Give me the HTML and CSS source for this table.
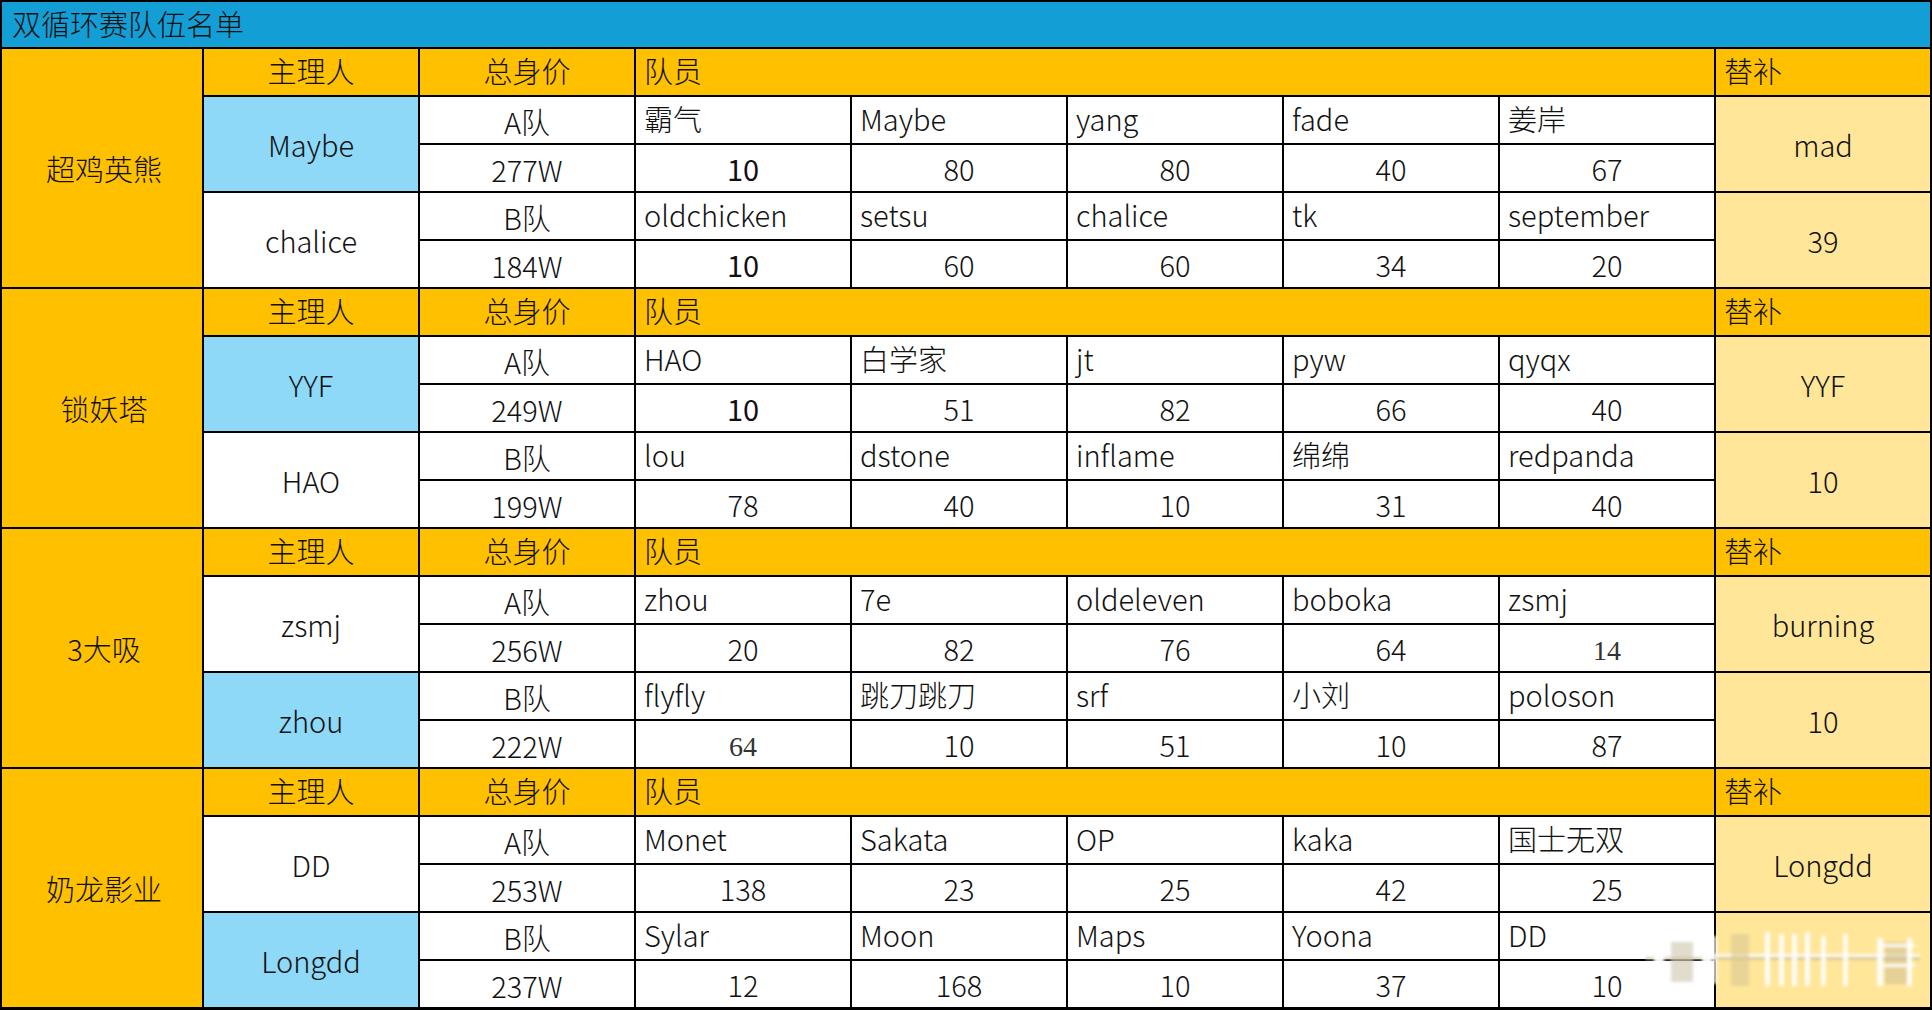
FILE: index.html
```html
<!DOCTYPE html>
<html lang="zh">
<head>
<meta charset="utf-8">
<title>双循环赛队伍名单</title>
<link rel="stylesheet" href="styles.css">
</head>
<body>
<div class="sheet">
  <div class="title">双循环赛队伍名单</div>

  <section class="group">
    <div class="c team">超鸡英熊</div>
    <div class="c hd ctr">主理人</div>
    <div class="c hd ctr">总身价</div>
    <div class="c hd pad members">队员</div>
    <div class="c hd pad">替补</div>

    <div class="c mgr blue">Maybe</div>
    <div class="c ctr tag">A队</div>
    <div class="c name">霸气</div>
    <div class="c name">Maybe</div>
    <div class="c name">yang</div>
    <div class="c name">fade</div>
    <div class="c name">姜岸</div>
    <div class="c sub">mad</div>

    <div class="c ctr tag">277W</div>
    <div class="c num strong">10</div>
    <div class="c num">80</div>
    <div class="c num">80</div>
    <div class="c num">40</div>
    <div class="c num">67</div>

    <div class="c mgr">chalice</div>
    <div class="c ctr tag">B队</div>
    <div class="c name">oldchicken</div>
    <div class="c name">setsu</div>
    <div class="c name">chalice</div>
    <div class="c name">tk</div>
    <div class="c name">september</div>
    <div class="c sub">39</div>

    <div class="c ctr tag">184W</div>
    <div class="c num strong">10</div>
    <div class="c num">60</div>
    <div class="c num">60</div>
    <div class="c num">34</div>
    <div class="c num">20</div>
  </section>

  <section class="group">
    <div class="c team">锁妖塔</div>
    <div class="c hd ctr">主理人</div>
    <div class="c hd ctr">总身价</div>
    <div class="c hd pad members">队员</div>
    <div class="c hd pad">替补</div>

    <div class="c mgr blue">YYF</div>
    <div class="c ctr tag">A队</div>
    <div class="c name">HAO</div>
    <div class="c name">白学家</div>
    <div class="c name">jt</div>
    <div class="c name">pyw</div>
    <div class="c name">qyqx</div>
    <div class="c sub">YYF</div>

    <div class="c ctr tag">249W</div>
    <div class="c num strong">10</div>
    <div class="c num">51</div>
    <div class="c num">82</div>
    <div class="c num">66</div>
    <div class="c num">40</div>

    <div class="c mgr">HAO</div>
    <div class="c ctr tag">B队</div>
    <div class="c name">lou</div>
    <div class="c name">dstone</div>
    <div class="c name">inflame</div>
    <div class="c name">绵绵</div>
    <div class="c name">redpanda</div>
    <div class="c sub">10</div>

    <div class="c ctr tag">199W</div>
    <div class="c num">78</div>
    <div class="c num">40</div>
    <div class="c num">10</div>
    <div class="c num">31</div>
    <div class="c num">40</div>
  </section>

  <section class="group">
    <div class="c team">3大吸</div>
    <div class="c hd ctr">主理人</div>
    <div class="c hd ctr">总身价</div>
    <div class="c hd pad members">队员</div>
    <div class="c hd pad">替补</div>

    <div class="c mgr">zsmj</div>
    <div class="c ctr tag">A队</div>
    <div class="c name">zhou</div>
    <div class="c name">7e</div>
    <div class="c name">oldeleven</div>
    <div class="c name">boboka</div>
    <div class="c name">zsmj</div>
    <div class="c sub">burning</div>

    <div class="c ctr tag">256W</div>
    <div class="c num">20</div>
    <div class="c num">82</div>
    <div class="c num">76</div>
    <div class="c num">64</div>
    <div class="c num serif">14</div>

    <div class="c mgr blue">zhou</div>
    <div class="c ctr tag">B队</div>
    <div class="c name">flyfly</div>
    <div class="c name">跳刀跳刀</div>
    <div class="c name">srf</div>
    <div class="c name">小刘</div>
    <div class="c name">poloson</div>
    <div class="c sub">10</div>

    <div class="c ctr tag">222W</div>
    <div class="c num serif">64</div>
    <div class="c num">10</div>
    <div class="c num">51</div>
    <div class="c num">10</div>
    <div class="c num">87</div>
  </section>

  <section class="group">
    <div class="c team">奶龙影业</div>
    <div class="c hd ctr">主理人</div>
    <div class="c hd ctr">总身价</div>
    <div class="c hd pad members">队员</div>
    <div class="c hd pad">替补</div>

    <div class="c mgr">DD</div>
    <div class="c ctr tag">A队</div>
    <div class="c name">Monet</div>
    <div class="c name">Sakata</div>
    <div class="c name">OP</div>
    <div class="c name">kaka</div>
    <div class="c name">国士无双</div>
    <div class="c sub">Longdd</div>

    <div class="c ctr tag">253W</div>
    <div class="c num">138</div>
    <div class="c num">23</div>
    <div class="c num">25</div>
    <div class="c num">42</div>
    <div class="c num">25</div>

    <div class="c mgr blue">Longdd</div>
    <div class="c ctr tag">B队</div>
    <div class="c name">Sylar</div>
    <div class="c name">Moon</div>
    <div class="c name">Maps</div>
    <div class="c name">Yoona</div>
    <div class="c name">DD</div>
    <div class="c sub"></div>

    <div class="c ctr tag">237W</div>
    <div class="c num">12</div>
    <div class="c num">168</div>
    <div class="c num">10</div>
    <div class="c num">37</div>
    <div class="c num">10</div>
  </section>

  <svg class="watermark" width="280" height="72" viewBox="0 0 280 72" aria-hidden="true">
    <defs>
      <filter id="blur" x="-20%" y="-20%" width="140%" height="140%">
        <feGaussianBlur stdDeviation="1.8"/>
      </filter>
    </defs>
    <g filter="url(#blur)">
      <rect x="0" y="33" width="275" height="3" fill="#c9bb92" opacity="0.7"/>
      <rect x="0" y="30" width="275" height="3" fill="#ffffff" opacity="0.85"/>
      <path d="M14 6 V46 Q14 64 38 64 Q62 64 62 46 V4" fill="none" stroke="#ffffff" stroke-width="10" opacity="0.95"/>
      <rect x="26" y="18" width="22" height="40" fill="#cfc5ae" opacity="0.6"/>
      <rect x="68" y="12" width="4" height="48" fill="#ffffff" opacity="0.8"/>
      <rect x="86" y="10" width="18" height="52" fill="#d8c893" opacity="0.6"/>
      <rect x="120" y="8" width="5" height="54" fill="#ffffff" opacity="0.9"/>
      <rect x="134" y="10" width="5" height="52" fill="#ffffff" opacity="0.9"/>
      <rect x="147" y="10" width="5" height="52" fill="#ffffff" opacity="0.9"/>
      <rect x="160" y="8" width="5" height="54" fill="#ffffff" opacity="0.9"/>
      <rect x="176" y="12" width="5" height="50" fill="#ffffff" opacity="0.85"/>
      <rect x="198" y="10" width="5" height="52" fill="#ffffff" opacity="0.85"/>
      <rect x="232" y="14" width="6" height="48" fill="#ffffff" opacity="0.9"/>
      <rect x="240" y="18" width="22" height="42" fill="#cfc098" opacity="0.55"/>
      <rect x="238" y="20" width="32" height="3" fill="#ffffff" opacity="0.9"/>
      <rect x="238" y="40" width="32" height="3" fill="#ffffff" opacity="0.9"/>
      <rect x="262" y="14" width="5" height="48" fill="#ffffff" opacity="0.9"/>
    </g>
  </svg>
</div>
</body>
</html>
```

FILE: styles.css
```css
* {
  box-sizing: border-box;
  margin: 0;
  padding: 0;
}

html, body {
  margin: 0;
  background: #ffffff;
}

body {
  font-family: "Noto Sans CJK SC", "Noto Sans", sans-serif;
  font-weight: 300;
  color: #111111;
}

.sheet {
  position: relative;
  width: 1932px;
  height: 1010px;
  background: #000000;
  padding: 2px 2px 3px 2px;
  display: flex;
  flex-direction: column;
  gap: 2px;
  overflow: hidden;
}

.title {
  height: 45px;
  background: #139fd6;
  font-size: 29px;
  padding-left: 10px;
  padding-bottom: 2px;
  display: flex;
  align-items: center;
  line-height: 1;
}

.group {
  display: grid;
  grid-template-columns: 200px repeat(8, 1fr);
  grid-template-rows: repeat(5, 46px);
  gap: 2px;
}

.c {
  background: #ffffff;
  display: flex;
  align-items: center;
  font-size: 29px;
  line-height: 1;
  white-space: nowrap;
  overflow: hidden;
}

.team {
  grid-row: span 5;
  background: #ffc000;
  justify-content: center;
  padding-left: 4px;
}

.hd {
  background: #ffc000;
  padding-bottom: 3px;
}

.members {
  grid-column: span 5;
}

.ctr {
  justify-content: center;
}

.pad {
  padding-left: 8px;
}

.tag {
  padding-top: 2px;
}

.mgr {
  grid-row: span 2;
  justify-content: center;
}

.blue {
  background: #8ed8f8;
}

.sub {
  grid-row: span 2;
  background: #ffe699;
  justify-content: center;
}

.name {
  padding-left: 8px;
  padding-bottom: 4px;
}

.num {
  justify-content: center;
  padding-top: 0;
}

.strong {
  font-weight: 400;
}

.serif {
  font-family: "Liberation Serif", serif;
  font-size: 28px;
  color: #333333;
  padding-top: 5px;
}

.watermark {
  position: absolute;
  left: 1645px;
  top: 924px;
}
```
